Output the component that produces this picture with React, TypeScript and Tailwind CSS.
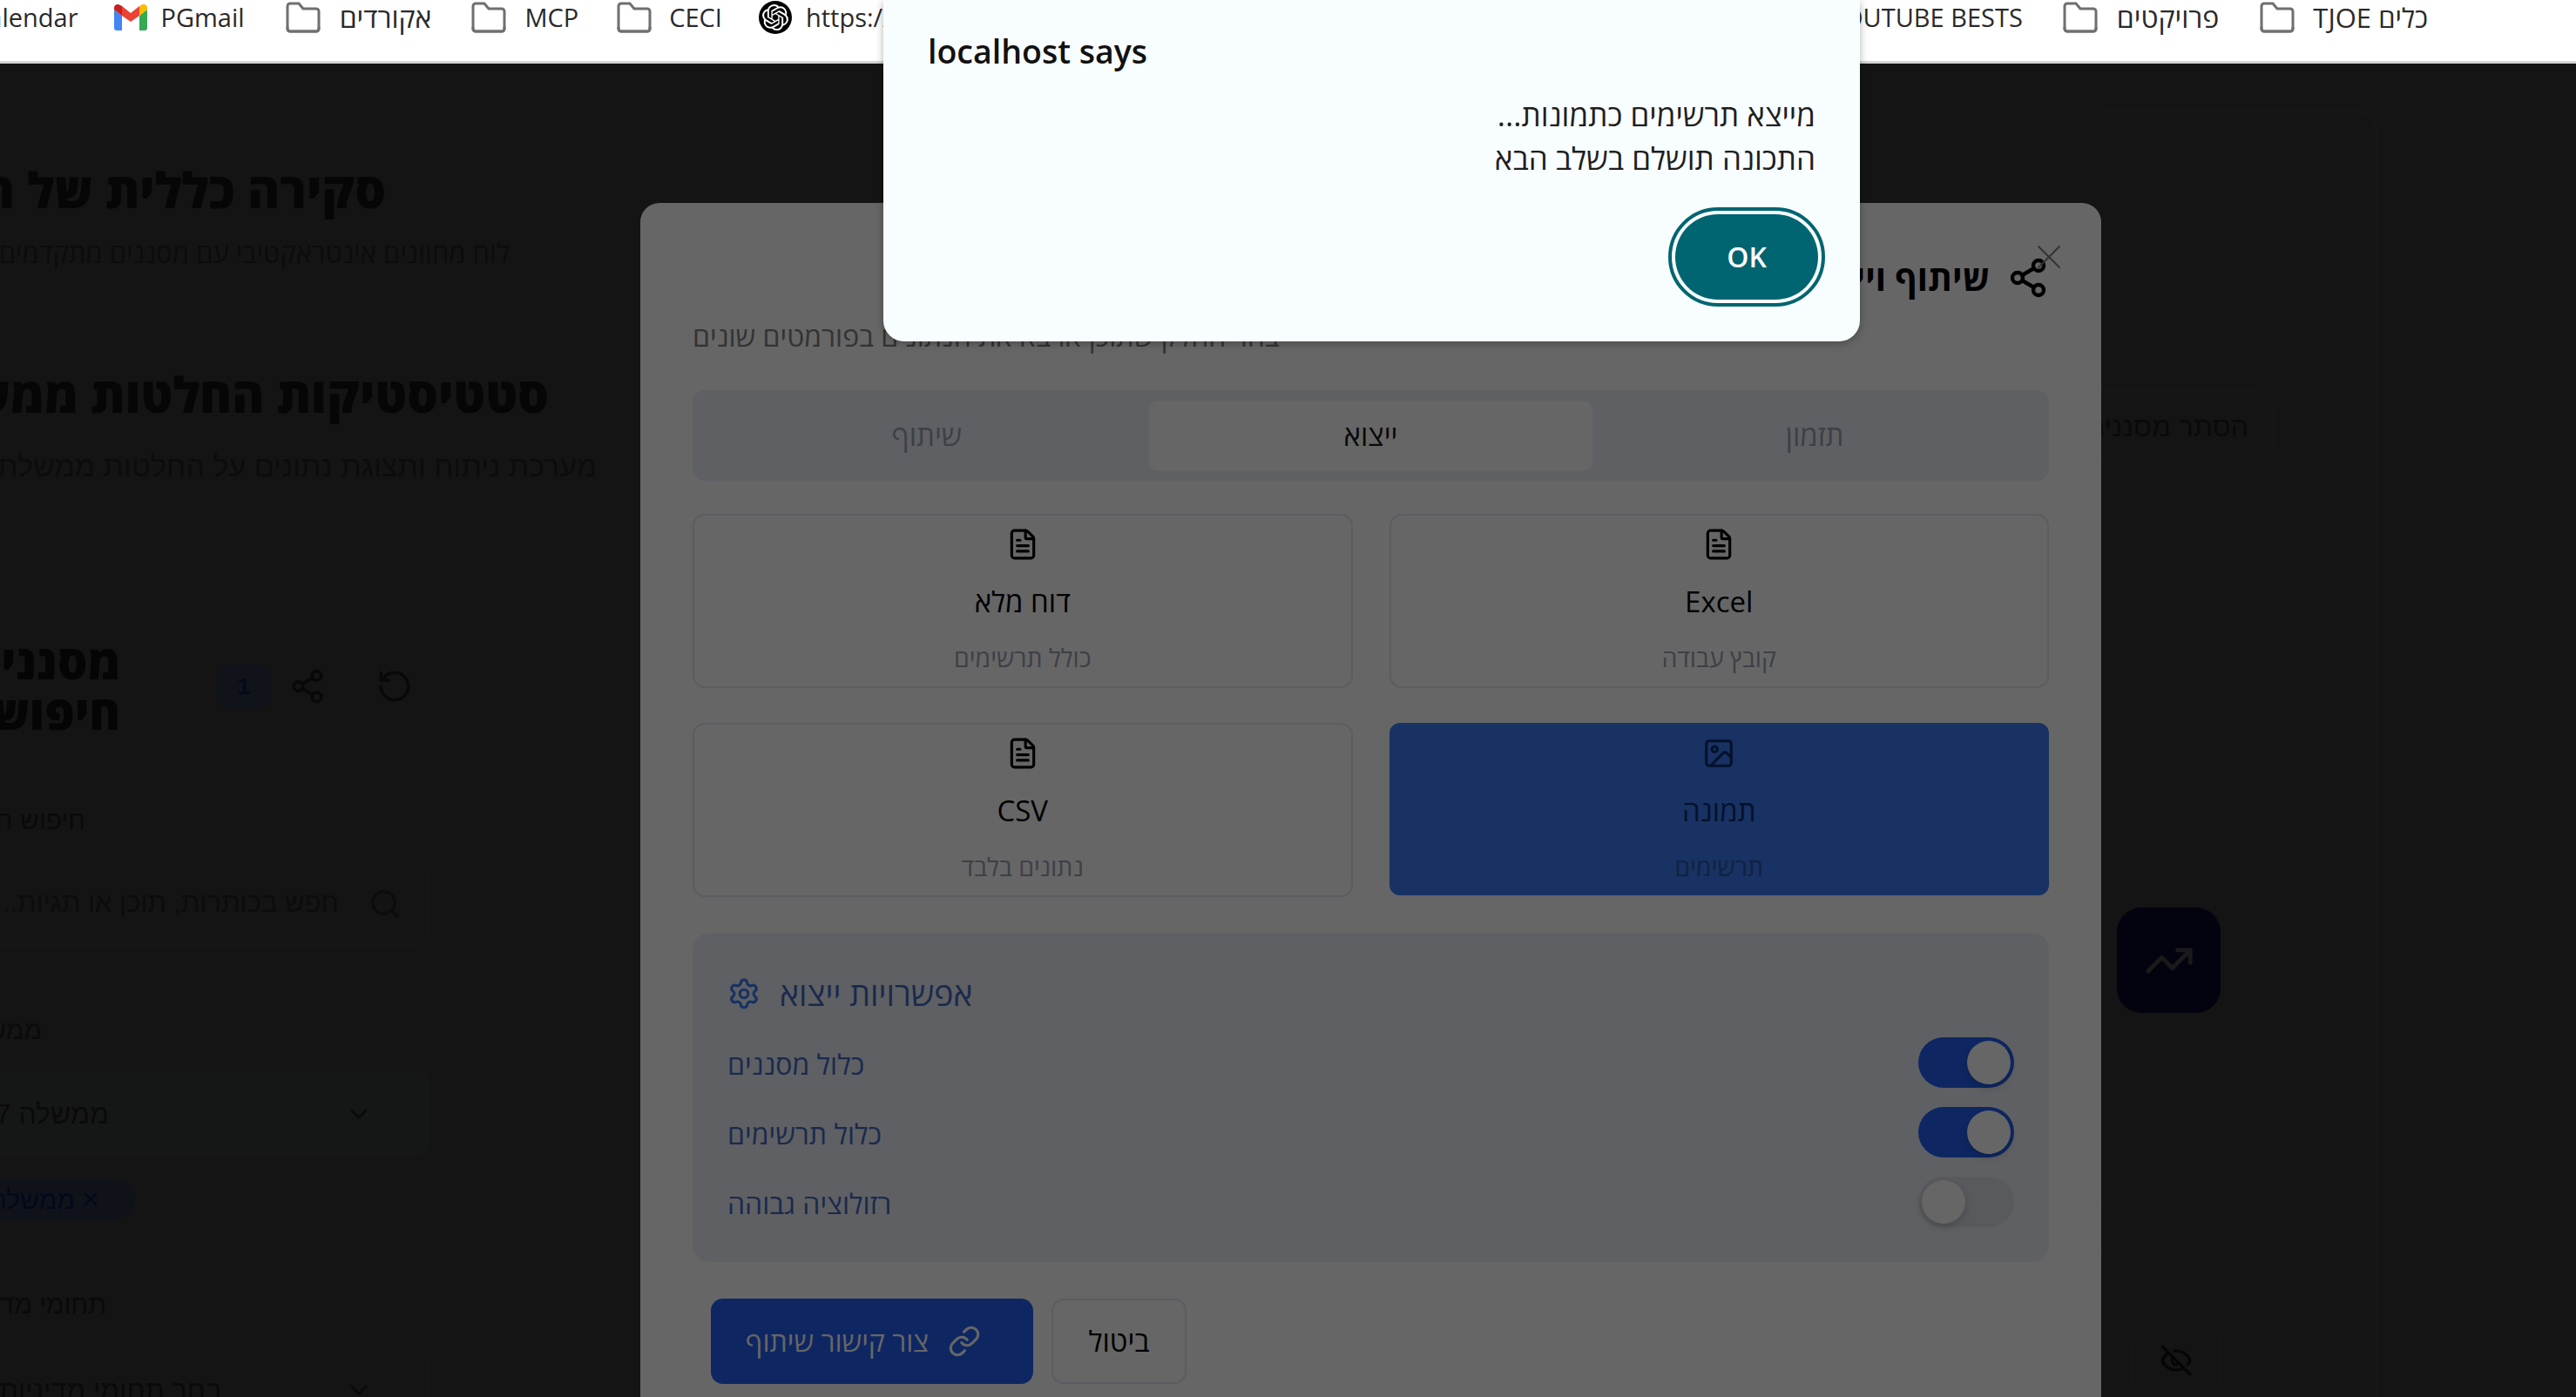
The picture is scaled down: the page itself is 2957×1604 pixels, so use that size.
import { ChevronDown, EyeOff, FileText, Image, Link, RotateCcw, Search, Settings, Share2, TrendingUp, X } from "lucide-react";
import { SiOpenai } from "react-icons/si";

function Folder() {
  return (
    <svg width="40" height="36" viewBox="0 0 40 36" fill="none" className="shrink-0">
      <path d="M2 5a3 3 0 0 1 3-3h10l5 6h15a3 3 0 0 1 3 3v20a3 3 0 0 1-3 3H5a3 3 0 0 1-3-3V5z" stroke="#6f6f6f" strokeWidth="3" />
      <path d="M2 29v2a3 3 0 0 0 3 3h30a3 3 0 0 0 3-3v-2" stroke="#6f6f6f" strokeWidth="3" />
    </svg>
  );
}

function Gmail() {
  return (
    <svg width="38" height="30" viewBox="0 0 38 30" className="shrink-0">
      <path d="M0 27a3 3 0 0 0 3 3h6V13L0 6z" fill="#4285f4" />
      <path d="M29 30h6a3 3 0 0 0 3-3V6l-9 7z" fill="#34a853" />
      <path d="M29 2v11l9-7V4c0-3.500-4-5.500-7-3z" fill="#fbbc04" />
      <path d="M9 13V2l10 8 10-8v11L19 20z" fill="#ea4335" />
      <path d="M0 4v2l9 7V2L7 1C4-1 0 .5 0 4z" fill="#c5221f" />
    </svg>
  );
}

function Toggle({ on }: { on: boolean }) {
  return (
    <div className={on ? "flex h-[58px] w-[110px] items-center justify-end rounded-full bg-[#0e2763] pr-[4px]" : "flex h-[58px] w-[110px] items-center justify-start rounded-full bg-[#585a5e] pl-[4px]"}>
      <div className="h-[50px] w-[50px] rounded-full bg-[#666666] shadow-[0_4px_8px_rgba(0,0,0,0.18)]" />
    </div>
  );
}

function OptionRow({ label, on }: { label: string; on: boolean }) {
  return (
    <div className="flex h-[58px] items-center justify-between" dir="ltr">
      <span dir="rtl" className="mt-[4px] text-[32px] text-[#1a2a4d]">{label}</span>
      <Toggle on={on} />
    </div>
  );
}

function FormatCard({ title, sub, selected, image }: { title: string; sub: string; selected?: boolean; image?: boolean }) {
  const Icon = image ? Image : FileText;
  return (
    <div className={selected ? "flex h-[198px] flex-col items-center rounded-[12px] bg-[#173263] pt-[16px]" : "flex h-[200px] flex-col items-center rounded-[14px] border-2 border-[#5b5d61] pt-[14px]"}>
      <Icon size={38} strokeWidth={2} className={selected ? "text-[#06112b]" : "text-black"} />
      <div className={selected ? "mt-[23px] text-[33px] leading-[48px] text-[#06112b]" : "mt-[23px] text-[33px] leading-[48px] text-black"}>{title}</div>
      <div className={selected ? "mt-[22px] text-[28.5px] leading-[36px] text-[#12223f]" : "mt-[22px] text-[28.5px] leading-[36px] text-[#3c4047]"}>{sub}</div>
    </div>
  );
}

function BgLabel({ text, mt, right }: { text: string; mt: string; right: string }) {
  return <div className={`h-[40px] text-[30px] leading-[40px] text-[#0a0a0a] ${mt} ${right}`}>{text}</div>;
}

export default function App() {
  return (
    <div className="relative h-[1604px] w-[2957px] overflow-hidden bg-[#141414] font-['Open_Sans',sans-serif]">
      {/* bookmarks bar */}
      <div className="flex h-[73px] items-start justify-between border-b-[3px] border-[#d6d6d6] bg-white text-[29px] leading-[38px] text-[#2a2a2a]">
        <div className="-ml-[32px] flex h-[40px] items-center">
          <span>Calendar</span>
          <span className="ml-[42px]"><Gmail /></span>
          <span className="ml-[15px]">PGmail</span>
          <span className="ml-[47px]"><Folder /></span>
          <span className="ml-[22px] text-[32px]" dir="rtl">אקורדים</span>
          <span className="ml-[46px]"><Folder /></span>
          <span className="ml-[21px]">MCP</span>
          <span className="ml-[44px]"><Folder /></span>
          <span className="ml-[20px]">CECI</span>
          <span className="ml-[42px] flex h-[38px] w-[38px] items-center justify-center rounded-full bg-black"><SiOpenai size={30} className="text-white" /></span>
          <span className="ml-[16px]">https://chatgpt.com</span>
        </div>
        <div className="mr-[170px] flex h-[40px] items-center">
          <span>YOUTUBE BESTS</span>
          <span className="ml-[46px]"><Folder /></span>
          <span className="ml-[22px] text-[32px]" dir="rtl">פרויקטים</span>
          <span className="ml-[47px]"><Folder /></span>
          <span className="ml-[21px] text-[31px]" dir="rtl">כלים TJOE</span>
        </div>
      </div>

      {/* dimmed page behind the dialogs */}
      <div className="flex h-[1531px] justify-between">
        <div dir="rtl" className="w-[735px] whitespace-nowrap font-['Liberation_Sans',sans-serif]">
          <h1 className="mt-[109px] h-[70px] pr-[292px] font-['Open_Sans',sans-serif] text-[56px] font-extrabold leading-[70px] text-[#060606]">סקירה כללית של המערכת</h1>
          <p className="mt-[18px] h-[40px] pr-[150px] font-['Open_Sans',sans-serif] text-[31px] leading-[40px] text-[#0c0c0c]">לוח מחוונים אינטראקטיבי עם מסננים מתקדמים</p>
          <h2 className="mt-[107px] h-[70px] pr-[105px] font-['Open_Sans',sans-serif] text-[56px] font-extrabold leading-[70px] text-[#060606]">סטטיסטיקות החלטות ממשלה</h2>
          <p className="mt-[28px] h-[40px] pr-[50px] text-[34px] leading-[40px] text-[#0c0c0c]">מערכת ניתוח ותצוגת נתונים על החלטות ממשלת ישראל</p>
          <div className="mt-[175px] flex h-[116px] items-center pr-[261px]">
            <RotateCcw size={42} strokeWidth={2} className="shrink-0 text-[#080808]" />
            <Share2 size={42} strokeWidth={2} className="mr-[58px] shrink-0 text-[#080808]" />
            <div className="mr-[22px] flex h-[50px] w-[60px] shrink-0 items-center justify-center rounded-[12px] bg-[#10131a] text-[26px] font-bold text-[#03081a]">1</div>
            <div className="mr-[112px] shrink-0 font-['Open_Sans',sans-serif] text-[54px] font-extrabold leading-[58px] text-[#050505]">מסנני<br />חיפוש</div>
          </div>
          <BgLabel text="חיפוש חופשי" mt="mt-[76px]" right="pr-[637px]" />
          <div className="-ml-[300px] mr-[243px] mt-[28px] flex h-[95px] items-center rounded-[14px] border border-[#171717] pr-[30px]">
            <Search size={38} strokeWidth={2} className="text-[#0c0c0c]" />
            <span className="mr-[34px] text-[31px] text-[#0c0c0c]">חפש בכותרות, תוכן או תגיות...</span>
          </div>
          <BgLabel text="ממשלות" mt="mt-[78px]" right="pr-[687px]" />
          <div className="-ml-[300px] mr-[243px] mt-[27px] flex h-[98px] items-center rounded-[14px] border border-[#171717] bg-[#151716] pr-[62px]">
            <ChevronDown size={34} strokeWidth={2} className="text-[#0a0a0a]" />
            <span className="mr-[270px] text-[32px] text-[#0a0a0a]">ממשלה 7 נבחרו</span>
          </div>
          <div className="-ml-[200px] mr-[580px] mt-[26px] flex h-[46px] items-center rounded-full bg-[#10121a] pr-[38px] text-[30px] text-[#03081a]">
            <X size={26} strokeWidth={2} />
            <span className="mr-[5px]">ממשלה 37</span>
          </div>
          <BgLabel text="תחומי מדיניות" mt="mt-[78px]" right="pr-[613px]" />
          <div className="-ml-[300px] mr-[243px] mt-[29px] flex h-[98px] items-center rounded-[14px] border border-[#171717] pr-[62px]">
            <ChevronDown size={34} strokeWidth={2} className="text-[#0a0a0a]" />
            <span className="mr-[140px] text-[32px] text-[#0a0a0a]">בחר תחומי מדיניות...</span>
          </div>
        </div>

        <div dir="ltr" className="mr-[227px] mt-[52px] h-[1479px] w-[318px] rounded-tr-[28px] border-r-[3px] border-t-[3px] border-[#171717] font-['Liberation_Sans',sans-serif]">
          <div dir="rtl" className="-ml-[102px] mt-[321px] flex h-[82px] w-[300px] items-center whitespace-nowrap rounded-[14px] border border-[#171717] pr-[28px] text-[32px] text-[#0a0a0a]">הסתר מסננים</div>
          <div className="-ml-[20px] mt-[40px] flex h-[809px] w-[219px] items-end rounded-br-[28px] border-b border-r border-[#171717] pb-[216px] pl-[38px]">
            <div className="flex h-[121px] w-[119px] items-center justify-center rounded-[28px] bg-[#03030f]">
              <TrendingUp size={58} strokeWidth={2} className="text-[#1a1a1a]" />
            </div>
          </div>
          <div className="-ml-[20px] mt-[58px] flex h-[163px] w-[219px] items-end rounded-tr-[28px] border-r border-t border-[#171717] pl-[55px]">
            <div className="flex h-[78px] w-[102px] items-center justify-center rounded-[14px] border border-[#171717]">
              <EyeOff size={38} strokeWidth={2} className="text-[#050505]" />
            </div>
          </div>
        </div>
      </div>

      {/* share dialog */}
      <div dir="rtl" className="absolute left-[735px] top-[233px] h-[1400px] w-[1677px] rounded-[22px] bg-[#666666] px-[60px] pt-[58px]">
        <X size={48} strokeWidth={1} className="absolute left-[1593px] top-[38px] text-[#333333]" />
        <div className="flex h-[56px] items-center">
          <Share2 size={48} strokeWidth={2.2} className="text-black" />
          <h3 className="mr-[20px] text-[40px] font-bold text-black">שיתוף וייצוא</h3>
        </div>
        <p className="mt-[19px] h-[40px] text-left text-[32px] leading-[40px] text-[#333333]">בחר החלק שתוכן או  בא את הנתונים בפורמטים שונים</p>
        <div className="mt-[42px] grid h-[104px] grid-cols-3 items-center rounded-[14px] bg-[#5f6063] px-[14px] text-[33px] text-[#3c4047]">
          <div className="text-center">תזמון</div>
          <div className="flex h-[81px] items-center justify-center rounded-[10px] bg-[#666666] text-[#0a0a0a]">ייצוא</div>
          <div className="text-center">שיתוף</div>
        </div>
        <div className="mt-[38px] grid grid-cols-2 gap-x-[42px] gap-y-[40px]">
          <FormatCard title="Excel" sub="קובץ עבודה" />
          <FormatCard title="דוח מלא" sub="כולל תרשימים" />
          <FormatCard title="תמונה" sub="תרשימים" selected image />
          <FormatCard title="CSV" sub="נתונים בלבד" />
        </div>
        <div className="mt-[41px] h-[378px] rounded-[20px] bg-[#5f6063] px-[40px] pt-[48px]">
          <div className="flex h-[44px] items-center justify-end gap-[22px]">
            <span className="text-[37.5px] text-[#1a2a4d]">אפשרויות ייצוא</span>
            <Settings size={38} strokeWidth={2} className="text-[#173263]" />
          </div>
          <div className="mt-[28px] flex flex-col gap-[22px]">
            <OptionRow label="כלול מסננים" on />
            <OptionRow label="כלול תרשימים" on />
            <OptionRow label="רזולוציה גבוהה" on={false} />
          </div>
        </div>
        <div className="mt-[42px] flex justify-end gap-[21px] pl-[21px]" dir="ltr">
          <div dir="rtl" className="order-2 flex h-[98px] w-[155px] items-center justify-center rounded-[14px] border-2 border-[#5b5d61] text-[33px] text-black">ביטול</div>
          <div dir="rtl" className="order-1 flex h-[98px] w-[370px] items-center justify-center gap-[22px] rounded-[14px] bg-[#0e2763] pr-[20px] text-[32px] text-[#666666]">
            <Link size={38} strokeWidth={2} />
            <span>צור קישור שיתוף</span>
          </div>
          <div className="order-3 grow" />
        </div>
      </div>

      {/* browser alert */}
      <div className="absolute left-[1014px] top-0 h-[392px] w-[1121px] rounded-b-[24px] bg-[#f8fdff] px-[51px] shadow-[0_2px_10px_rgba(0,0,0,0.3)]">
        <div className="pt-[34px] text-[37.5px] font-semibold leading-[50px] text-[#111111]">localhost says</div>
        <div dir="rtl" className="mt-[23px] text-[35px] leading-[50px] text-[#1f1f1f]">
          <div>מייצא תרשימים כתמונות...</div>
          <div>התכונה תושלם בשלב הבא</div>
        </div>
        <div className="mt-[31px] flex justify-end">
          <div className="-mr-[11px] flex h-[114px] w-[180px] items-center justify-center rounded-full border-[4px] border-[#006570] p-[4px]">
            <div className="flex h-full w-full items-center justify-center rounded-full bg-[#006570] text-[32px] font-semibold text-white">OK</div>
          </div>
        </div>
      </div>
    </div>
  );
}
